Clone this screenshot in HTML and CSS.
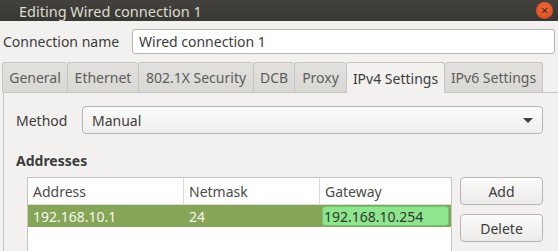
FILE: index.html
```html
<!DOCTYPE html>
<html lang="en">
  <head>
    <meta charset="UTF-8" />
    <title>Editing Wired connection 1</title>
    <link rel="stylesheet" href="styles.css">
  </head>
  <body>
    <div class="titlebar">
      <span class="title">Editing Wired connection 1</span>
      <span class="close">×</span>
    </div>

    <div class="namerow">
      <label for="conname">Connection name</label>
      <input type="text" id="conname" value="Wired connection 1" />
    </div>

    <div class="tabs">
      <div class="tab t-general">General</div>
      <div class="tab t-ethernet">Ethernet</div>
      <div class="tab t-security">802.1X Security</div>
      <div class="tab t-dcb">DCB</div>
      <div class="tab t-proxy">Proxy</div>
      <div class="tab t-ipv4 active">IPv4 Settings</div>
      <div class="tab t-ipv6">IPv6 Settings</div>
    </div>

    <div class="panel">
      <div class="method">
        <span class="method-label">Method</span>
        <div class="combo">
          <span>Manual</span>
          <span class="arrow"></span>
        </div>
      </div>

      <div class="section-title">Addresses</div>

      <div class="addresses">
        <div class="table">
          <div class="row head">
            <div class="cell c-addr">Address</div>
            <div class="cell c-mask">Netmask</div>
            <div class="cell c-gw">Gateway</div>
          </div>
          <div class="row selected">
            <div class="cell c-addr">192.168.10.1</div>
            <div class="cell c-mask">24</div>
            <div class="cell c-gw"><span class="editing">192.168.10.254</span></div>
          </div>
        </div>
        <div class="buttons">
          <button>Add</button>
          <button>Delete</button>
        </div>
      </div>
    </div>
  </body>
</html>
```

FILE: styles.css
```css
body {
  margin: 0;
  height: 251px;
  background: #f2f1f0;
  font-family: "Noto Sans", sans-serif;
  font-size: 14px;
  color: #3c3c3c;
  overflow: hidden;
}
.titlebar {
  height: 21px;
  display: flex;
  align-items: center;
  padding-left: 19px;
  padding-right: 5px;
  background: linear-gradient(#42413d, #383732);
}
.title {
  color: #dfdbd2;
  font-size: 14.5px;
}
.close {
  margin-left: auto;
  width: 17px;
  height: 17px;
  border-radius: 50%;
  background: radial-gradient(circle at 50% 35%, #f0673a, #d8461c);
  color: #3a2a20;
  font-size: 13px;
  line-height: 16px;
  text-align: center;
}
.namerow {
  display: flex;
  align-items: center;
  margin-top: 8px;
  padding-left: 3px;
}
.namerow label {
  width: 129px;
}
.namerow input {
  width: 423px;
  height: 25px;
  box-sizing: border-box;
  border: 1px solid #b6b5b1;
  border-radius: 3px;
  background: #fff;
  font-family: inherit;
  font-size: 14px;
  color: #3c3c3c;
  padding: 0 6px;
}
.tabs {
  display: flex;
  margin-top: 8px;
  padding-left: 2px;
  height: 30px;
}
.tab {
  box-sizing: border-box;
  height: 30px;
  border: 1px solid #c6c5c1;
  border-bottom: none;
  border-right: none;
  border-radius: 3px 3px 0 0;
  background: linear-gradient(#e2e1de, #d9d8d5);
  color: #5d5d5a;
  display: flex;
  align-items: center;
  justify-content: center;
}
.t-ipv6 {
  border-right: 1px solid #c6c5c1;
}
.tab.active {
  background: #f2f1f0;
  color: #3c3c3c;
  border-right: 1px solid #c6c5c1;
  height: 31px;
  position: relative;
  z-index: 1;
}
.t-general { width: 65px; }
.t-ethernet { width: 71px; }
.t-security { width: 115px; }
.t-dcb { width: 41px; }
.t-proxy { width: 52px; }
.t-ipv4 { width: 99px; }
.t-ipv6 { width: 98px; border-left: none; }
.panel {
  box-sizing: border-box;
  margin-left: 3px;
  border: 1px solid #c6c5c1;
  border-right: none;
  border-bottom: none;
  height: 159px;
  padding: 13px 0 0 12px;
}
.method {
  display: flex;
  align-items: center;
}
.method-label {
  width: 66px;
}
.combo {
  box-sizing: border-box;
  width: 461px;
  height: 28px;
  border: 1px solid #b6b5b1;
  border-radius: 4px;
  background: linear-gradient(#fbfbfa, #efeeed);
  display: flex;
  align-items: center;
  padding: 0 9px;
}
.arrow {
  margin-left: auto;
  border-left: 5px solid transparent;
  border-right: 5px solid transparent;
  border-top: 5px solid #3c3c3c;
}
.section-title {
  font-weight: bold;
  margin-top: 17px;
}
.addresses {
  display: flex;
  margin-top: 7px;
  padding-left: 11px;
}
.table {
  width: 425px;
  height: 74px;
  box-sizing: border-box;
  border: 1px solid #c6c5c1;
  border-bottom: none;
  background: #fff;
}
.row {
  display: flex;
}
.head {
  height: 26px;
  border-bottom: 1px solid #dcdbd8;
  color: #4b4b48;
}
.cell {
  box-sizing: border-box;
  display: flex;
  align-items: center;
  padding-left: 5px;
}
.c-addr { width: 156px; }
.c-mask { width: 136px; }
.c-gw { flex: 1; }
.head .c-addr, .head .c-mask {
  border-right: 1px solid #dcdbd8;
}
.selected {
  height: 22px;
  background: #87a556;
  color: #f6f7f0;
}
.selected .c-gw {
  padding: 1px 2px 1px 2px;
}
.editing {
  box-sizing: border-box;
  width: 100%;
  height: 20px;
  background: #8ee58e;
  border: 1px solid #6fc56f;
  border-radius: 3px;
  color: #2f3a2f;
  padding-left: 1px;
  display: flex;
  align-items: center;
}
.buttons {
  display: flex;
  flex-direction: column;
  gap: 9px;
  margin-left: 8px;
}
button {
  width: 83px;
  height: 28px;
  border: 1px solid #b6b5b1;
  border-radius: 4px;
  background: linear-gradient(#fbfbfa, #ecebea);
  font-family: inherit;
  font-size: 14px;
  color: #3c3c3c;
}
```
